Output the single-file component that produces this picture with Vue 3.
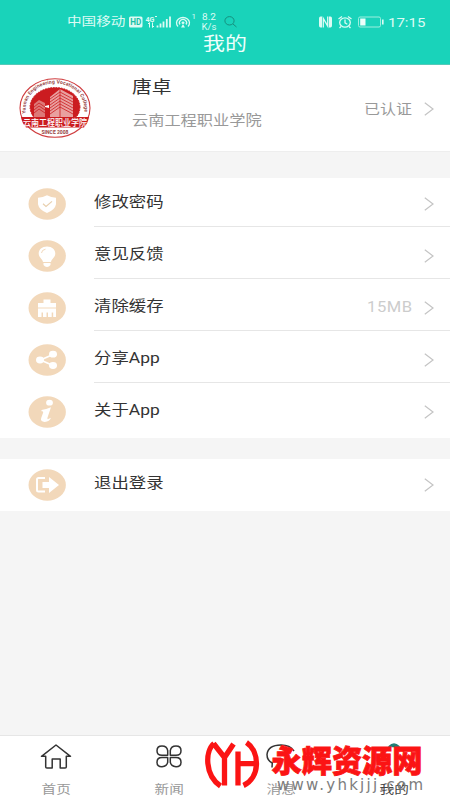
<script setup>
const account = [
  { icon: 'shield', label: '修改密码' },
  { icon: 'bulb', label: '意见反馈' },
  { icon: 'brush', label: '清除缓存', value: '15MB' },
  { icon: 'share', label: '分享App' },
  { icon: 'info', label: '关于App' },
]
const groups = [account, [{ icon: 'logout', label: '退出登录' }]]

const tabs = [
  { icon: 'home', label: '首页' },
  { icon: 'news', label: '新闻' },
  { icon: 'chat', label: '消息' },
  { icon: 'me', label: '我的', on: true },
]
</script>

<template>
  <div class="page">
    <header class="top">
      <div class="status">
        <span class="carrier"><span class="wide">中国移动</span></span>
        <svg class="net" width="112" height="24" viewBox="0 0 112 24">
          <rect x="2" y="6.500" width="13.500" height="11" rx="1.500" fill="#dcfbf4" />
          <text class="hd" x="3.200" y="15" font-size="8.500" font-weight="700" textLength="11" lengthAdjust="spacingAndGlyphs">HD</text>
          <text x="18.500" y="11.500" font-size="7" font-weight="700" textLength="9" lengthAdjust="spacingAndGlyphs">4G</text>
          <path d="M28 6.500h2M22.500 12.500v5M21 14l1.500-1.500M25.500 12.500v5M27 16l-1.500 1.500" class="ln" />
          <path d="M30.500 15.500v2M33.500 13.500v4M36.500 11.500v6M39.800 9v8.500M43 6.500v11" stroke="#dcfbf4" stroke-width="1.800" />
          <g class="ln" stroke-width="1.300">
            <path d="M51 16.500a6.500 5.500 0 1 1 10 0" />
            <path d="M53 14.500a3.600 3.200 0 1 1 6 0" />
          </g>
          <ellipse cx="56" cy="12.700" rx="1.500" ry="1.300" fill="#dcfbf4" />
          <path d="M54 17.500l2-3.500 2 3.500z" fill="#dcfbf4" />
          <text x="64.500" y="9" font-size="8">1</text>
          <text x="75" y="9.500" font-size="9" textLength="14" lengthAdjust="spacingAndGlyphs">8.2</text>
          <text x="74.500" y="19.500" font-size="9" textLength="15" lengthAdjust="spacingAndGlyphs">K/s</text>
          <g fill="none" stroke="#168f7d" stroke-width="1">
            <ellipse cx="102.500" cy="10.800" rx="4.600" ry="4.200" />
            <path d="M106 14l3.500 3" />
          </g>
        </svg>
        <svg class="sys" width="70" height="24" viewBox="0 0 70 24">
          <path d="M5 6.500H3.500q-1.500 0-1.500 2v7q0 2 1.500 2H5zM12 6.500h1.500q1.500 0 1.500 2v7q0 2-1.500 2H12z" fill="#dcfbf4" />
          <path d="M6.300 17.500V8.500l4.400 7.500V6.500" fill="none" stroke="#dcfbf4" stroke-width="1.300" />
          <g class="ln" stroke-width="1.300">
            <ellipse cx="28" cy="12.500" rx="5.300" ry="4.700" />
            <path d="M28 9.500v3.300l2.300 1.400M21.500 9L25 6.500M34.500 9L31 6.500M24 16.500l-1.500 1.500M32 16.500l1.500 1.500" />
            <rect x="41.500" y="7" width="22" height="10" rx="1.500" stroke="#9cefdf" stroke-width="1" />
          </g>
          <rect x="43.200" y="8.500" width="5.300" height="7" fill="#eafffb" />
          <path d="M65.800 9.500v5" stroke="#dcfbf4" stroke-width="1.600" />
        </svg>
        <span class="clock"><span class="wide">17:15</span></span>
      </div>
      <h1 class="title"><span class="wide">我的</span></h1>
    </header>

    <section class="profile">
      <svg class="seal" width="72" height="62" viewBox="0 0 72 62">
        <defs>
          <path id="ring" d="M7.500 39.500C3 22 16 6.500 36 6.500s33 15.500 28.500 33" />
        </defs>
        <ellipse cx="36" cy="31" rx="35" ry="29.300" fill="#fff" stroke="#cf3d3f" stroke-width="1.100" />
        <ellipse cx="36" cy="30" rx="25" ry="19.500" fill="#cb1c20" stroke="#cb1c20" stroke-dasharray="1.500 1.200" />
        <text font-size="5" font-weight="700" fill="#963f3f" textLength="94" lengthAdjust="spacing"><textPath href="#ring" startOffset="3">Yunnan Engineering Vocational College</textPath></text>
        <path d="M31 40V20l10-8 13 7v21z" fill="#e9a09f" />
        <path d="M15 40V27l5-4 6 3v14z" fill="#dd7978" />
        <path d="M31 22l10-7 13 7M31 25l10-7 13 7M31 28l10-7 13 7M31 31l10-7 13 7M31 34l10-7 13 7M31 37l10-7 13 7M15 30l5-4 6 4M15 33l5-4 6 4M15 36l5-4 6 4M41 12v28" fill="none" stroke="#cb1c20" stroke-width=".8" />
        <path d="M26 29l4-1v3l-4-1z" fill="#fff" />
        <path d="M2 40h68q-1 6-5 10.500H7q-4-4.500-5-10.500z" fill="#cb1c20" />
        <text x="4" y="48.700" font-size="9" font-weight="500" fill="#fff" textLength="64" lengthAdjust="spacingAndGlyphs">云南工程职业学院</text>
        <text x="22.500" y="57" font-size="4.800" font-weight="700" fill="#963f3f" textLength="27" lengthAdjust="spacingAndGlyphs">SINCE 2008</text>
      </svg>
      <div class="who">
        <p class="name"><span class="wide">唐卓</span></p>
        <p class="school"><span class="wide">云南工程职业学院</span></p>
      </div>
      <span class="verified"><span class="wide">已认证</span></span>
      <svg class="chev" width="10" height="14" viewBox="0 0 10 14"><path d="M.8 .8L9 7 .8 13.200" /></svg>
    </section>

    <ul v-for="(rows, g) in groups" :key="g" class="group">
      <li v-for="row in rows" :key="row.label" class="row">
        <svg class="badge" width="38" height="32" viewBox="0 0 38 32">
          <ellipse cx="19.200" cy="16" rx="18.700" ry="15.700" fill="#f2d8ba" />
          <g v-if="row.icon === 'shield'">
            <path d="M19 7.200q4 2 9 2.600v6.500q-1 5.700-9 8.700-8-3-9-8.700V9.800q5-.6 9-2.600z" fill="#fff" />
            <path d="M15 15.800l3 2.600 6-5" fill="none" stroke="#e8cfad" stroke-width="1.200" />
          </g>
          <g v-else-if="row.icon === 'bulb'">
            <path d="M19 6.500c-5 0-8.300 3-8.300 7 0 4 3.500 5 4.300 8.500h8c.8-3.500 4.300-4.500 4.300-8.500 0-4-3.300-7-8.300-7z" fill="#fff" />
            <path d="M15.500 23h7v2q-1.500 2-3.500 2t-3.500-2z" fill="#fff" />
            <path d="M13.500 13q.3-3.200 4-3.800M15 22.500h8" fill="none" stroke="#f2d8ba" stroke-width="1" />
          </g>
          <g v-else-if="row.icon === 'brush'" fill="#fff">
            <path d="M15.500 7.500h7v3.500H28v4.500H10v-4.500h5.500z" />
            <path d="M10 16.500h18v8.500h-2.800v-4.500h-1.500v4.500h-3.700v-4.500h-1.500v4.500H15v-4.500h-1.500v4.500H10z" />
          </g>
          <g v-else-if="row.icon === 'share'" fill="#fff">
            <path d="M25 10.500L12.500 16 25 21.500" fill="none" stroke="#fff" stroke-width="1.700" />
            <ellipse cx="12" cy="16" rx="4" ry="3.400" />
            <ellipse cx="25" cy="10.200" rx="4" ry="3.400" />
            <ellipse cx="25" cy="21.500" rx="4" ry="3.400" />
          </g>
          <g v-else-if="row.icon === 'info'" fill="#fff">
            <ellipse cx="21.500" cy="6.700" rx="3.400" ry="2.900" />
            <path d="M13.500 14q4.500-.5 9.500-2.800l-3.500 10.300q-.5 2 .8 1.600l2.700-1.400q-1.500 4-6.200 4.200-4.800 0-3.600-3.800l2-5.500q.3-1.500-1.700-1.300z" />
          </g>
          <g v-else>
            <path d="M17 9h-6.500Q9 9 9 10.500v10.500q0 1.500 1.500 1.500H17" fill="none" stroke="#fff" stroke-width="2" />
            <path d="M14.500 13h6.500V8l10 8-10 8v-5h-6.500z" fill="#fff" />
          </g>
        </svg>
        <div class="cell">
          <span class="label"><span class="wide">{{ row.label }}</span></span>
          <span v-if="row.value" class="value"><span class="wide">{{ row.value }}</span></span>
          <svg class="chev" width="10" height="14" viewBox="0 0 10 14"><path d="M.8 .8L9 7 .8 13.200" /></svg>
        </div>
      </li>
    </ul>

    <nav class="tabs">
      <div v-for="t in tabs" :key="t.label" class="tab" :class="{ on: t.on }">
        <svg width="34" height="28" viewBox="0 0 34 28">
          <path v-if="t.icon === 'home'" d="M17 2L2.500 13.300h4.200V24q0 1 1.200 1h5.300v-9h8v9h4.900q1.200 0 1.200-1V13.300h4.200z" />
          <g v-else-if="t.icon === 'news'">
            <path d="M15.700 12.300H10q-5 0-5-4.600t5-4.600 5.700 4.600z" />
            <path d="M18.300 12.300H24q5 0 5-4.600t-5-4.600-5.700 4.600z" />
            <path d="M15.700 14.600H10q-5 0-5 4.600t5 4.500 5.700-4.500z" />
            <path d="M18.300 14.600H24q5 0 5 4.600t-5 4.500-5.700-4.500z" />
          </g>
          <path v-else-if="t.icon === 'chat'" d="M8 24.500l.3-4.500Q3 17.500 3 11.500 4 2 17 2q9 0 13 6" />
          <path v-else d="M12 3.500q5-5 10 0z" fill="#207d75" stroke="#207d75" />
        </svg>
        <span class="tab-label"><span class="wide">{{ t.label }}</span></span>
      </div>
    </nav>

    <!-- site mark over the tab bar -->
    <svg class="mark" width="230" height="62" viewBox="0 0 230 62">
      <g fill="none" stroke="#fb1414" stroke-width="5.300">
        <path d="M14 5.500C5 13 4.500 37 20.500 48" />
        <path d="M13.500 5.500l11 14 9-13.500M24.500 18v29.500" />
        <path d="M38 13.500v34M38 25.700h18.500" />
        <path d="M46.500 4.500C60.500 14 60 40 43.500 47.500" />
      </g>
      <text class="mark-name" x="71.500" y="34" font-size="31" textLength="151" lengthAdjust="spacingAndGlyphs">永辉资源网</text>
      <text class="mark-url" x="77" y="51.500" font-size="15" textLength="146">www.yhkjjj.com</text>
    </svg>
  </div>
</template>

<style>
body {
  background: #f5f5f5;
}
</style>

<style scoped>
.page {
  position: relative;
  display: flex;
  flex-direction: column;
  height: 800px;
  overflow: hidden;
  background: #f5f5f5;
  color: #333;
  font-family: Roboto, "Noto Sans CJK SC", sans-serif;
}
/* wide glyphs, grown from the left edge */
.wide {
  display: inline-block;
  font-weight: 400;
  white-space: nowrap;
  transform: scaleX(1.2);
  transform-origin: 0 50%;
}
p, h1, ul {
  margin: 0;
  padding: 0;
}

/* header */
.top {
  height: 65px;
  flex: none;
  box-sizing: border-box;
  background: #19d3ba;
  border-bottom: 1px solid #55c9b8;
  color: #dcfbf4;
}
.status {
  display: flex;
  align-items: center;
  height: 24px;
  padding: 10px 0 0 67px;
}
.status > * {
  flex: none;
}
.status text {
  fill: #dcfbf4;
}
.status .hd {
  fill: #19bfa6;
}
.carrier {
  width: 60px;
  font-size: 12.200px;
  line-height: 24px;
}
.sys {
  margin-left: 78px;
}
.ln {
  fill: none;
  stroke: #dcfbf4;
}
.clock {
  width: 50px;
  margin-left: 1px;
  font-size: 12.500px;
}
.title {
  height: 22px;
  padding-left: 203px;
  font-size: 18.300px;
  line-height: 20px;
  color: #effffc;
}

/* profile */
.profile {
  display: flex;
  height: 87px;
  flex: none;
  padding-left: 19px;
  background: #fff;
  border-bottom: 1px solid #eee;
  box-sizing: border-box;
}
.seal {
  margin-top: 12px;
}
.who {
  width: 233px;
  padding: 12px 0 0 41px;
  box-sizing: border-box;
}
.name {
  font-size: 16.500px;
  line-height: 22px;
}
.school {
  margin-top: 10px;
  font-size: 13.500px;
  line-height: 22px;
  color: #999;
}
.verified {
  width: 60px;
  margin: 34px 0 0 40px;
  font-size: 13.300px;
  line-height: 22px;
  color: #999;
}
.profile .chev {
  margin-top: 37px;
}
.chev {
  flex: none;
  fill: none;
  stroke: #c4c4c4;
  stroke-width: 1.200;
}

/* list */
.group {
  list-style: none;
  background: #fff;
  margin-top: 26px;
}
.group + .group {
  margin-top: 21px;
}
.row {
  display: flex;
  height: 52px;
  padding-left: 28px;
}
.badge {
  margin-top: 10px;
}
.cell {
  display: flex;
  flex: 1;
  align-items: center;
  height: 48px;
  margin-left: 28px;
  padding-right: 16px;
  border-bottom: 1px solid #e6e6e6;
}
.row:last-child .cell {
  border-color: transparent;
}
.label {
  flex: 1;
  padding-top: 1px;
  font-size: 14.500px;
  line-height: 22px;
}
.value {
  width: 57px;
  padding-top: 1px;
  font-size: 13.800px;
  letter-spacing: 0.5px;
  color: #ccc;
}
.cell .chev {
  margin-top: 4px;
}

/* tab bar */
.tabs {
  display: flex;
  height: 65px;
  flex: none;
  margin-top: auto;
  box-sizing: border-box;
  background: #fff;
  border-top: 1px solid #e6e6e6;
}
.tab {
  flex: 1;
  display: flex;
  flex-direction: column;
  align-items: center;
  padding-top: 7px;
}
.tab svg {
  flex: none;
  fill: none;
  stroke: #333;
  stroke-width: 1.500;
  stroke-linejoin: round;
}
.tab-label {
  margin-top: 8px;
  font-size: 12.200px;
  line-height: 22px;
  color: #999;
}
.tab-label .wide {
  transform-origin: 50% 50%;
}
.tab.on .tab-label {
  color: #444;
}

.mark {
  position: absolute;
  left: 200px;
  top: 738px;
}
.mark-name {
  fill: #fb1414;
  stroke: #fb1414;
  stroke-width: 0.800;
  font-weight: 900;
}
.mark-url {
  fill: #7d7d7d;
  font-family: "DejaVu Sans", sans-serif;
}
</style>
